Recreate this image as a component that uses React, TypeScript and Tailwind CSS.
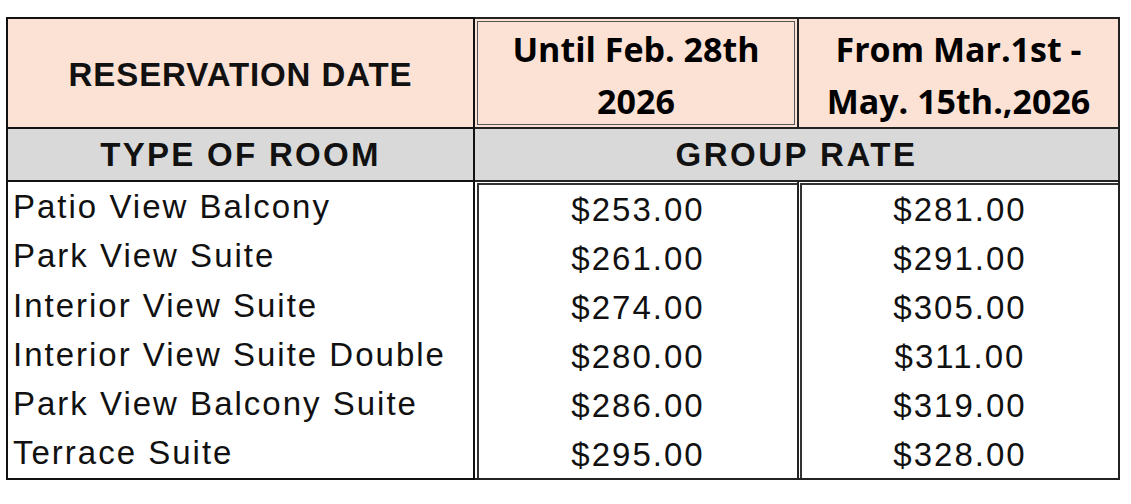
const rooms = [
  { name: "Patio View Balcony", early: "$253.00", late: "$281.00" },
  { name: "Park View Suite", early: "$261.00", late: "$291.00" },
  { name: "Interior View Suite", early: "$274.00", late: "$305.00" },
  { name: "Interior View Suite Double", early: "$280.00", late: "$311.00" },
  { name: "Park View Balcony Suite", early: "$286.00", late: "$319.00" },
  { name: "Terrace Suite", early: "$295.00", late: "$328.00" },
]

const arial = "font-['Liberation_Sans',Arial,sans-serif]"
const aptos = "font-['Open_Sans','Noto_Sans',sans-serif]"

export default function App() {
  return (
    <div className="w-[1131px] h-[504px] bg-white text-[#111]">
      <div className="pt-[17px] pl-[6px]">
        <div className="grid grid-cols-[469px_324px_321px] grid-rows-[112px_53px_298px]">
          {/* header row */}
          <div className={`${arial} bg-[#fbe2d5] border-2 border-[#111] flex items-center justify-center pt-[4px] text-[33px] font-bold tracking-[0.9px]`}>
            RESERVATION DATE
          </div>
          <div className="border-y-2 border-r-2 border-[#222] p-[2px] bg-[#fbe2d5]">
            <div className={`${aptos} h-full border border-[#555] flex flex-col items-center justify-center pt-[4px] text-[34px] font-bold leading-[52px] text-black`}>
              <span>Until Feb. 28th</span>
              <span>2026</span>
            </div>
          </div>
          <div className={`${aptos} bg-[#fbe2d5] border-y-2 border-r-2 border-[#222] flex flex-col items-center justify-center pt-[4px] text-[34px] font-bold leading-[52px] text-black`}>
            <span>From Mar.1st -</span>
            <span>May. 15th.,2026</span>
          </div>

          {/* sub header */}
          <div className={`${arial} bg-[#d9d9d9] border-x-2 border-b-2 border-[#111] flex items-center justify-center text-[33px] font-bold tracking-[2.3px]`}>
            TYPE OF ROOM
          </div>
          <div className={`${arial} col-span-2 bg-[#d9d9d9] border-r-2 border-b-2 border-[#222] flex items-center justify-center text-[33px] font-bold tracking-[2.5px]`}>
            GROUP RATE
          </div>

          {/* body */}
          <div className={`${arial} border-x-2 border-b-2 border-[#111] flex flex-col pl-[5px]`}>
            {rooms.map(r => (
              <div key={r.name} className="h-[49.3px] flex items-center text-[33px] tracking-[2px] whitespace-nowrap">
                {r.name}
              </div>
            ))}
          </div>
          <div className="border-b-2 border-r-2 border-[#222] pl-[2px] pt-[1px]">
            <div className={`${arial} h-full border-l-2 border-t-2 border-[#333] flex flex-col`}>
              {rooms.map(r => (
                <div key={r.name} className="h-[49px] flex items-center justify-center text-[33px] tracking-[2px]">
                  {r.early}
                </div>
              ))}
            </div>
          </div>
          <div className="border-b-2 border-r-2 border-[#222] pl-[1px] pt-[1px]">
            <div className={`${arial} h-full border-t-2 border-l-2 border-[#333] flex flex-col`}>
              {rooms.map(r => (
                <div key={r.name} className="h-[49px] flex items-center justify-center text-[33px] tracking-[2px]">
                  {r.late}
                </div>
              ))}
            </div>
          </div>
        </div>
      </div>
    </div>
  )
}
